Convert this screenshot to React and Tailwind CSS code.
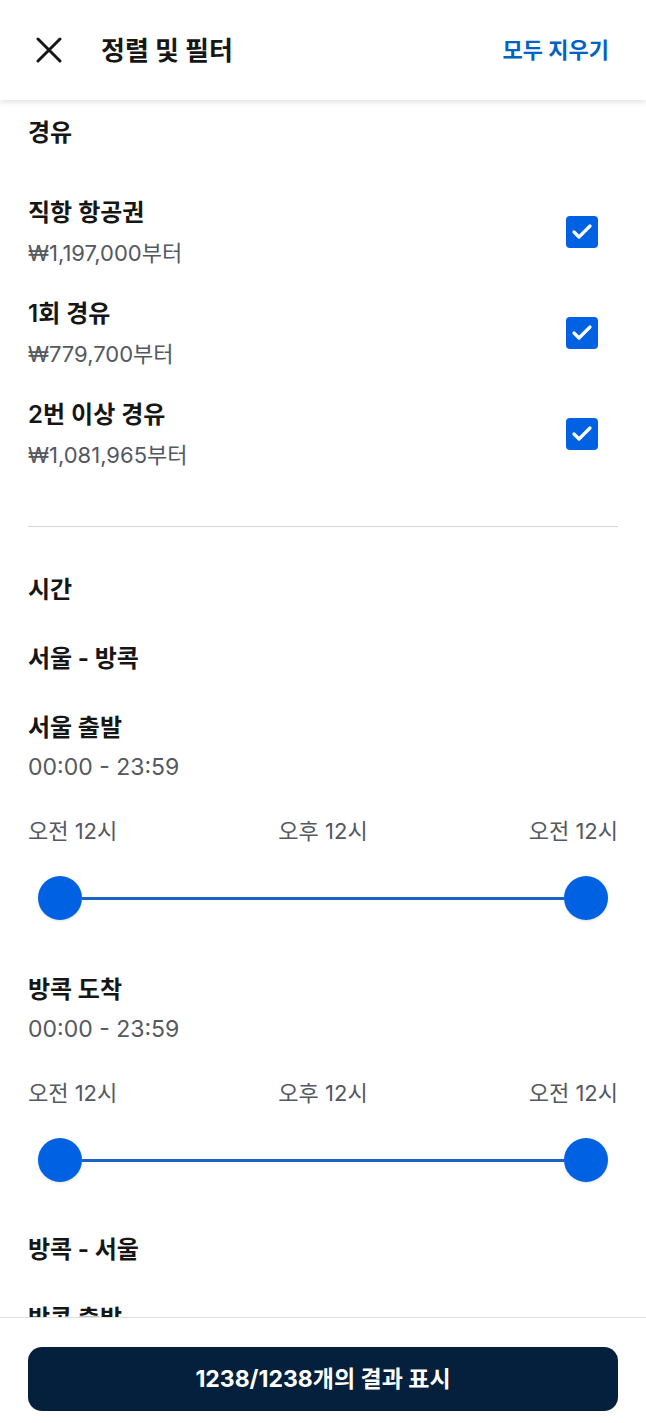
import React from "react";
import { Check } from "lucide-react";

const stops = [
  { label: "직항 항공권", price: "₩1,197,000부터" },
  { label: "1회 경유", price: "₩779,700부터" },
  { label: "2번 이상 경유", price: "₩1,081,965부터" },
];

function RangeSlider() {
  return (
    <div>
      <div className="flex justify-between text-[22px] leading-[28px] text-[#545860]">
        <span>오전 12시</span>
        <span>오후 12시</span>
        <span>오전 12시</span>
      </div>
      <div className="mt-[31px] px-[10px] flex items-center h-[44px]">
        <div className="w-[44px] h-[44px] rounded-full bg-[#0062e3] shadow-sm shrink-0" />
        <div className="flex-1 h-[3px] bg-[#1a63c4]" />
        <div className="w-[44px] h-[44px] rounded-full bg-[#0062e3] shadow-sm shrink-0" />
      </div>
    </div>
  );
}

function TimeBlock({ title, className }) {
  return (
    <div className={className}>
      <div className="text-[24px] leading-[32px] font-bold text-[#161616]">{title}</div>
      <div className="mt-[9px] text-[23px] leading-[28px] text-[#545860]">00:00 - 23:59</div>
      <div className="mt-[36px]">
        <RangeSlider />
      </div>
    </div>
  );
}

export default function App() {
  return (
    <div
      className="h-screen flex flex-col bg-white text-[#161616]"
      style={{ fontFamily: 'Inter, "Noto Sans CJK KR", "Noto Sans", sans-serif' }}
    >
      {/* 헤더 */}
      <div className="h-[100px] shrink-0 flex items-center justify-between pl-[36px] pr-[37px] shadow-[0_2px_6px_rgba(0,0,0,0.12)] relative z-10">
        <div className="flex items-center">
          <svg width="26" height="26" viewBox="0 0 26 26" fill="none" stroke="#161616" strokeWidth="3" strokeLinecap="round">
            <path d="M2 2 L24 24 M24 2 L2 24" />
          </svg>
          <div className="ml-[39px] text-[26px] font-bold">정렬 및 필터</div>
        </div>
        <button className="text-[22px] font-bold text-[#0062c4]">모두 지우기</button>
      </div>

      {/* 콘텐츠 */}
      <div className="flex-1 overflow-hidden px-[28px]">
        <div className="pt-[17px] text-[24px] leading-[32px] font-bold">경유</div>

        <div className="mt-[48px] flex flex-col gap-[31px]">
          {stops.map((s) => (
            <div key={s.label} className="flex items-center justify-between">
              <div>
                <div className="text-[24px] leading-[32px] font-semibold">{s.label}</div>
                <div className="mt-[10px] text-[22px] leading-[28px] text-[#545860]">{s.price}</div>
              </div>
              <div className="mr-[20px] w-[32px] h-[32px] rounded-[4px] bg-[#0062e3] flex items-center justify-center">
                <Check size={24} strokeWidth={3.2} color="white" />
              </div>
            </div>
          ))}
        </div>

        <div className="mt-[57px] h-px bg-[#d6d6d6]" />

        <div className="mt-[47px] text-[24px] leading-[32px] font-bold">시간</div>
        <div className="mt-[37px] text-[24px] leading-[32px] font-bold">서울 - 방콕</div>

        <TimeBlock title="서울 출발" className="mt-[37px]" />
        <TimeBlock title="방콕 도착" className="mt-[54px]" />

        <div className="mt-[52px] text-[24px] leading-[32px] font-bold">방콕 - 서울</div>
        <div className="mt-[37px] text-[24px] leading-[32px] font-bold">방콕 출발</div>
      </div>

      {/* 하단 버튼 */}
      <div className="shrink-0 border-t border-[#e0e0e0] px-[28px] pt-[29px] pb-[12px] bg-white">
        <button className="w-full h-[64px] rounded-[14px] bg-[#05203c] text-white text-[23px] font-bold">
          1238/1238개의 결과 표시
        </button>
      </div>
    </div>
  );
}
